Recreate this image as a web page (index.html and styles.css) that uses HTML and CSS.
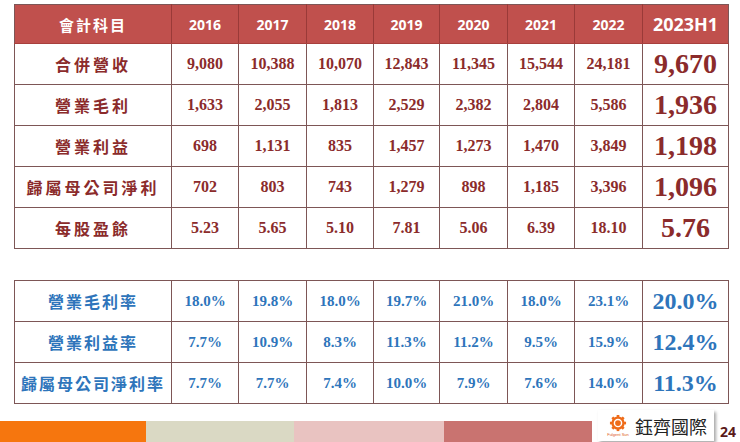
FILE: index.html
```html
<!DOCTYPE html>
<html lang="zh-Hant">
<head>
<meta charset="utf-8">
<link rel="stylesheet" href="styles.css">
</head>
<body>
<div class="page">
  <table class="fin top">
    <colgroup>
      <col class="c-label"><col class="c-y"><col class="c-y2"><col class="c-y"><col class="c-y3"><col class="c-y2"><col class="c-y"><col class="c-y2"><col class="c-last">
    </colgroup>
    <thead>
      <tr>
        <th class="lbl">會計科目</th><th>2016</th><th>2017</th><th>2018</th><th>2019</th><th>2020</th><th>2021</th><th>2022</th><th class="big">2023H1</th>
      </tr>
    </thead>
    <tbody>
      <tr><td class="lbl">合併營收</td><td>9,080</td><td>10,388</td><td>10,070</td><td>12,843</td><td>11,345</td><td>15,544</td><td>24,181</td><td class="big">9,670</td></tr>
      <tr><td class="lbl">營業毛利</td><td>1,633</td><td>2,055</td><td>1,813</td><td>2,529</td><td>2,382</td><td>2,804</td><td>5,586</td><td class="big">1,936</td></tr>
      <tr><td class="lbl">營業利益</td><td>698</td><td>1,131</td><td>835</td><td>1,457</td><td>1,273</td><td>1,470</td><td>3,849</td><td class="big">1,198</td></tr>
      <tr><td class="lbl">歸屬母公司淨利</td><td>702</td><td>803</td><td>743</td><td>1,279</td><td>898</td><td>1,185</td><td>3,396</td><td class="big">1,096</td></tr>
      <tr><td class="lbl">每股盈餘</td><td>5.23</td><td>5.65</td><td>5.10</td><td>7.81</td><td>5.06</td><td>6.39</td><td>18.10</td><td class="big">5.76</td></tr>
    </tbody>
  </table>

  <table class="fin ratio">
    <colgroup>
      <col class="c-label"><col class="c-y"><col class="c-y2"><col class="c-y"><col class="c-y3"><col class="c-y2"><col class="c-y"><col class="c-y2"><col class="c-last">
    </colgroup>
    <tbody>
      <tr><td class="lbl">營業毛利率</td><td>18.0%</td><td>19.8%</td><td>18.0%</td><td>19.7%</td><td>21.0%</td><td>18.0%</td><td>23.1%</td><td class="big">20.0%</td></tr>
      <tr><td class="lbl">營業利益率</td><td>7.7%</td><td>10.9%</td><td>8.3%</td><td>11.3%</td><td>11.2%</td><td>9.5%</td><td>15.9%</td><td class="big">12.4%</td></tr>
      <tr><td class="lbl">歸屬母公司淨利率</td><td>7.7%</td><td>7.7%</td><td>7.4%</td><td>10.0%</td><td>7.9%</td><td>7.6%</td><td>14.0%</td><td class="big">11.3%</td></tr>
    </tbody>
  </table>

  <div class="footer">
    <div class="bars">
      <div class="bar b1"></div>
      <div class="bar b2"></div>
      <div class="bar b3"></div>
      <div class="bar b4"></div>
    </div>
    <div class="logo">
      <div class="mark">
        <svg width="20" height="17" viewBox="0 0 22 19">
          <g fill="#ef6c1a">
            <circle cx="11" cy="9" r="7.4"/>
            <rect x="9.5" y="0" width="3" height="3" />
            <rect x="9.5" y="15" width="3" height="3" />
            <rect x="2" y="7.5" width="3" height="3" />
            <rect x="17" y="7.5" width="3" height="3" />
            <rect x="9.5" y="0" width="3" height="3" transform="rotate(45 11 9)"/>
            <rect x="9.5" y="0" width="3" height="3" transform="rotate(-45 11 9)"/>
            <rect x="9.5" y="15" width="3" height="3" transform="rotate(45 11 9)"/>
            <rect x="9.5" y="15" width="3" height="3" transform="rotate(-45 11 9)"/>
          </g>
          <circle cx="11" cy="9" r="4.8" fill="#fff"/>
          <circle cx="11" cy="9" r="3.2" fill="#ef6c1a"/>
        </svg>
        <span class="en">Fulgent Sun</span>
      </div>
      <span class="name">鈺齊國際</span>
    </div>
    <span class="pageno">24</span>
  </div>
</div>
</body>
</html>
```

FILE: styles.css
```css
html, body {
  margin: 0;
  padding: 0;
  background: #ffffff;
}

.page {
  width: 740px;
  height: 442px;
  display: flex;
  flex-direction: column;
  padding: 4px 0 0 14px;
  box-sizing: border-box;
  overflow: hidden;
}

.fin {
  border-collapse: collapse;
  table-layout: fixed;
  width: 714px;
}

.c-label { width: 157px; }
.c-y { width: 67px; }
.c-y2 { width: 68px; }
.c-y3 { width: 66px; }
.c-last { width: 86px; }

.fin th,
.fin td {
  border: 1px solid #7d5656;
  padding: 0;
  text-align: center;
  vertical-align: middle;
}

.fin th {
  height: 38px;
  background: #c0504d;
  color: #ffffff;
  font-family: "Open Sans", "Liberation Sans", sans-serif;
  font-weight: 700;
  font-size: 14px;
  border-color: #a8403d #9a3a38;
  border-top-color: #7d5656;
}

.fin th:first-child { border-left-color: #7d5656; }
.fin th:last-child { border-right-color: #7d5656; }

.fin th.big {
  font-size: 18px;
  font-weight: 700;
}

.fin th.lbl {
  font-family: "Noto Sans CJK TC", "Noto Sans", sans-serif;
  font-size: 15px;
  letter-spacing: 2px;
}

.fin td {
  height: 40px;
  font-family: "Liberation Serif", "Times New Roman", serif;
  font-weight: 700;
  font-size: 16px;
  color: #8b2b2b;
}

.fin td.lbl {
  font-family: "Noto Sans CJK TC", "Noto Sans", sans-serif;
  font-size: 16px;
  letter-spacing: 3px;
  font-weight: 700;
}

.fin td.big {
  font-size: 28px;
}

.ratio {
  margin-top: 31px;
}

.ratio td {
  color: #2e75bb;
  height: 40px;
  font-size: 15px;
}

.ratio td.lbl {
  letter-spacing: 2px;
}

.ratio td.big {
  font-size: 24px;
}

.footer {
  margin-top: 4px;
  margin-left: -14px;
  display: flex;
  align-items: flex-start;
  height: 36px;
}

.bars {
  display: flex;
  align-self: flex-end;
  height: 21px;
}

.bar { width: 148px; height: 21px; }
.b1 { width: 146px; background: #f6760e; }
.b2 { background: #dad9c4; }
.b3 { width: 150px; background: #e9c3c1; }
.b4 { width: 148px; background: #c97370; }

.logo {
  margin-left: 6px;
  margin-top: 2px;
  width: 116px;
  height: 31px;
  background: #ffffff;
  box-shadow: 2px 2px 3px rgba(0, 0, 0, 0.35);
  display: flex;
  align-items: center;
  gap: 5px;
  padding-left: 8px;
  box-sizing: border-box;
}

.mark {
  display: flex;
  flex-direction: column;
  align-items: center;
  width: 24px;
  margin-top: 2px;
}

.mark svg { display: block; }

.en {
  font-family: "Liberation Sans", sans-serif;
  font-size: 4px;
  color: #e0571a;
  line-height: 6px;
  white-space: nowrap;
}

.name {
  font-family: "Noto Sans CJK TC", sans-serif;
  font-size: 18px;
  color: #222222;
  letter-spacing: 0px;
}

.pageno {
  margin-left: 6px;
  margin-top: 14px;
  font-family: "Open Sans", "Liberation Sans", sans-serif;
  font-weight: 700;
  font-size: 14px;
  color: #5a1a1a;
}
```
